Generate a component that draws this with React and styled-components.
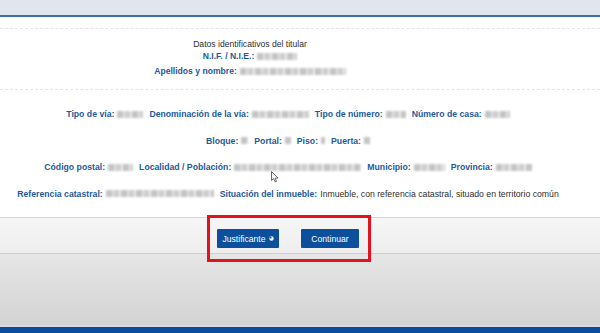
import styled, { createGlobalStyle } from "styled-components"

const Global = createGlobalStyle`
    html, body { margin: 0; padding: 0; background: #fff; }
    body { font-family: "Liberation Sans", Arial, sans-serif; }
`

const Page = styled.div`
    width: 600px;
    height: 333px;
    display: flex;
    flex-direction: column;
    overflow: hidden;
    position: relative;
`

const TopBand = styled.div`
    height: 15px;
    background: #e1e6ee;
    border-bottom: 2px solid #3c6ea4;
    flex-shrink: 0;
`

const Main = styled.div`
    padding-top: 11px;
    background: #fff;
`

const Titular = styled.div`
    border-top: 1px dashed #e4e4e4;
    border-bottom: 1px dashed #e4e4e4;
    padding: 9px 100px 11px 0;
    display: flex;
    flex-direction: column;
    align-items: center;
    font-size: 8.6px;
`

const Title = styled.div`
    line-height: 12px;
    color: #2e2e2e;
`

const Line = styled.div`
    line-height: ${p => p.$lh || 13}px;
    margin-top: ${p => p.$mt || 0}px;
    display: flex;
    align-items: center;
`

const Details = styled.div`
    padding: 11px 24px 10px 0;
    display: flex;
    flex-direction: column;
    align-items: center;
    font-size: 8.7px;
`

const Row = styled.div`
    height: 26.5px;
    display: flex;
    align-items: center;
    gap: 6px;
    white-space: nowrap;
`

const Field = styled.span`
    display: inline-flex;
    align-items: center;
    gap: 3px;
`

const Label = styled.b`
    color: #1d5a98;
    font-weight: 700;
`

const Plain = styled.span`
    color: #2e2e2e;
`

const Blur = styled.span`
    display: inline-block;
    width: ${p => p.$w}px;
    height: 7px;
    background: repeating-linear-gradient(90deg, #c4c4c4 0 6px, #e2e2e2 6px 8px, #cdcdcd 8px 13px, #ececec 13px 15px);
    filter: blur(1.1px);
`

const ActionBar = styled.div`
    box-sizing: border-box;
    height: 37px;
    border-top: 1px solid #d6d6d6;
    border-bottom: 1px solid #cfcfcf;
    background: linear-gradient(#f6f6f6, #eeeeee);
    display: flex;
    justify-content: center;
    align-items: flex-start;
    padding: 11px 24px 0 0;
    flex-shrink: 0;
`

const ButtonGroup = styled.div`
    position: relative;
    display: flex;
    gap: 22px;
    &::after {
        content: "";
        position: absolute;
        inset: -14px -12px -14px -10px;
        border: 3px solid #e3131b;
        pointer-events: none;
    }
`

const Button = styled.button`
    height: 19px;
    width: ${p => p.$w}px;
    padding: 0;
    border: none;
    border-radius: 1px;
    background: #0c4f9c;
    color: #fff;
    font-family: "Liberation Sans", Arial, sans-serif;
    font-size: 8.6px;
    display: flex;
    align-items: center;
    justify-content: center;
    gap: 3px;
`

const Bottom = styled.div`
    flex: 1;
    background: linear-gradient(#e6e6e6, #d3d3d3);
    border-bottom: 2px solid #d8dbe4;
`

const BlueBar = styled.div`
    height: 6px;
    background: #0b4d9b;
    flex-shrink: 0;
`

const Cursor = styled.svg`
    position: absolute;
    left: 271px;
    top: 171px;
`

const rows = [
    [["Tipo de vía:", 26], ["Denominación de la vía:", 57], ["Tipo de número:", 20], ["Número de casa:", 25]],
    [["Bloque:", 7], ["Portal:", 6], ["Piso:", 4], ["Puerta:", 6]],
    [["Código postal:", 25], ["Localidad / Población:", 127], ["Municipio:", 31], ["Provincia:", 36]],
]

const App = () => {
    return <Page>
        <Global />
        <TopBand />
        <Main>
            <Titular>
                <Title>Datos identificativos del titular</Title>
                <Line><Field><Label>N.I.F. / N.I.E.:</Label><Blur $w={40} /></Field></Line>
                <Line $lh={14} $mt={1}><Field><Label>Apellidos y nombre:</Label><Blur $w={106} /></Field></Line>
            </Titular>
            <Details>
                {rows.map((r, i) => (
                    <Row key={i}>
                        {r.map(([l, w]) => (
                            <Field key={l}><Label>{l}</Label><Blur $w={w} /></Field>
                        ))}
                    </Row>
                ))}
                <Row>
                    <Field><Label>Referencia catastral:</Label><Blur $w={108} /></Field>
                    <Field><Label>Situación del inmueble:</Label><Plain>Inmueble, con referencia catastral, situado en territorio común</Plain></Field>
                </Row>
            </Details>
        </Main>
        <ActionBar>
            <ButtonGroup>
                <Button $w={62}>
                    Justificante
                    <svg width="5" height="5" viewBox="0 0 10 10">
                        <circle cx="5" cy="5" r="4.5" fill="#fff" />
                        <path d="M5 5 L5 1 A4 4 0 0 0 1 5 Z" fill="#0c4f9c" />
                    </svg>
                </Button>
                <Button $w={58}>Continuar</Button>
            </ButtonGroup>
        </ActionBar>
        <Bottom />
        <BlueBar />
        <Cursor width="8" height="12" viewBox="0 0 8 12">
            <path d="M0.5 0.5 L0.5 9.5 L2.6 7.6 L4.2 11 L5.6 10.4 L4.1 7.1 L7 7 Z" fill="#fff" stroke="#444" strokeWidth="0.8" strokeLinejoin="round" />
        </Cursor>
    </Page>
}

export default App
